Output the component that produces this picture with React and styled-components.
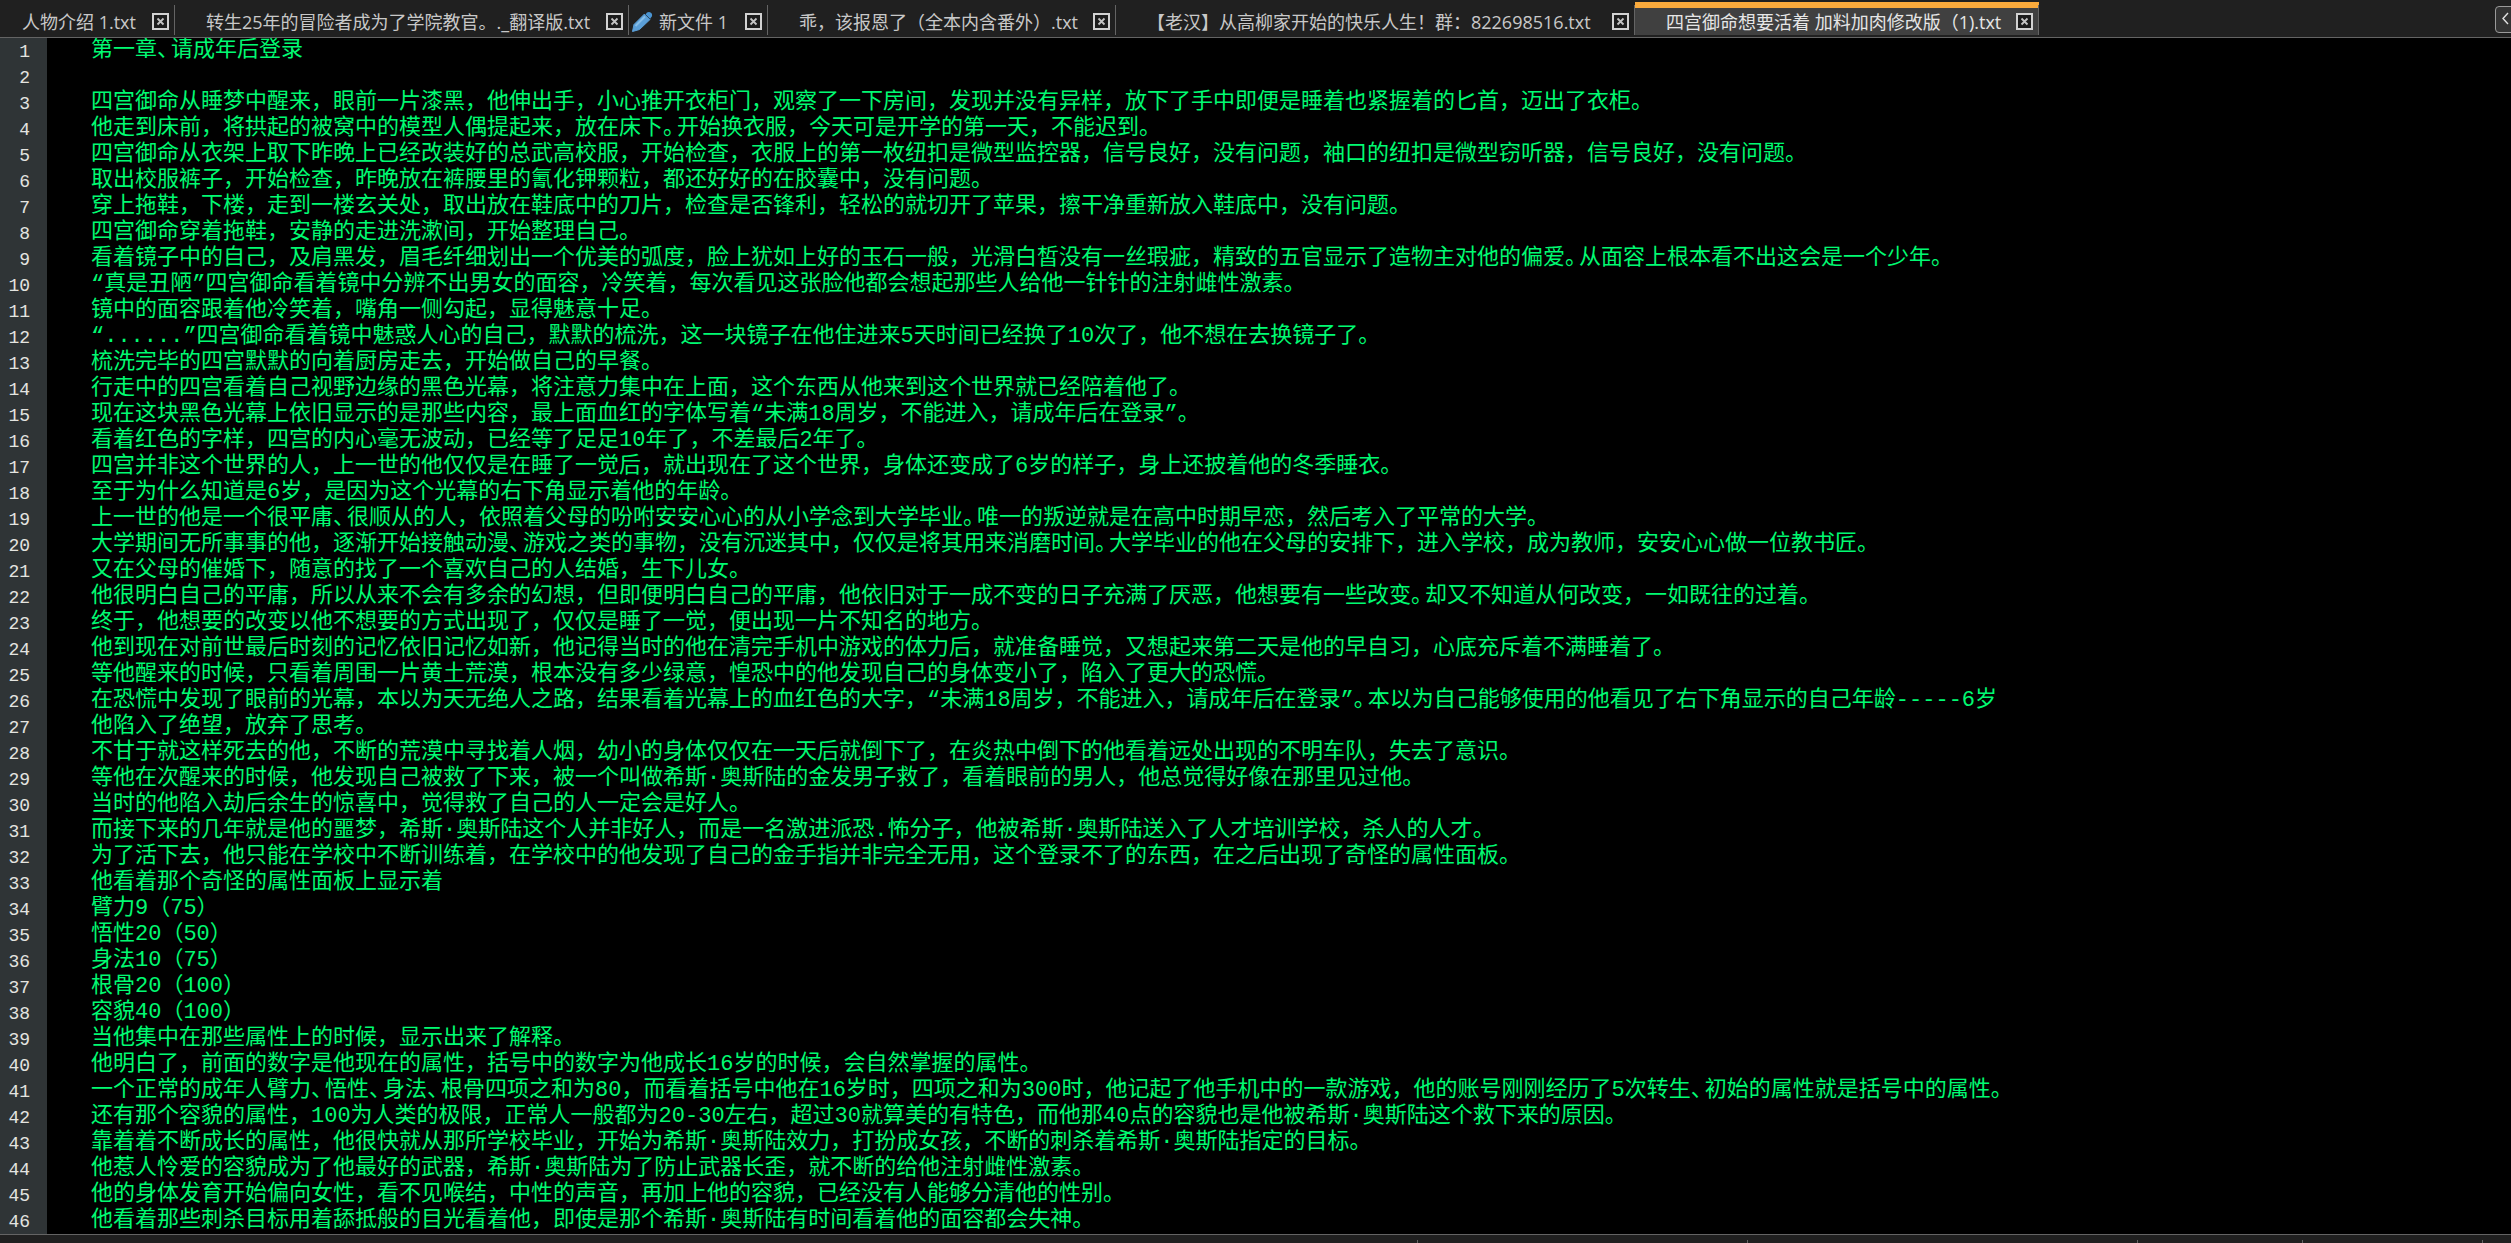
import React from 'react';
import styled, { createGlobalStyle } from 'styled-components';

const GlobalStyle = createGlobalStyle`
    body {
        margin: 0;
        background: #000;
    }

    * {
        box-sizing: border-box;
    }
`

const Page = styled.div`
    display: flex;
    flex-direction: column;
    height: 100vh;
    overflow: hidden;
    background: #000;
`

const TabBar = styled.nav`
    display: flex;
    flex: none;
    height: 38px;
    padding: 2px 0;
    background: #202020;
    border-bottom: 1px solid #646464;
    overflow: hidden;
`

const Tab = styled.div`
    display: flex;
    flex: none;
    align-items: center;
    width: ${props => props.$width}px;
    padding: 0 6px 0 ${props => props.$icon ? 3 : 31}px;
    border-top: 6px solid ${props => props.$active ? '#faaa3c' : 'transparent'};
    background: ${props => props.$active ? '#404040' : 'transparent'};
    position: relative;

    &::after {
        content: '';
        position: absolute;
        right: 0;
        top: -3px;
        bottom: 0;
        width: 1px;
        background: #646464;
    }

    &:first-child {
        padding-left: 22px;
    }
`

const TabTitle = styled.button`
    display: flex;
    flex: 1;
    align-items: center;
    gap: 6px;
    padding: 0;
    border: 0;
    background: none;
    color: ${props => props.$active ? '#e6e6e6' : '#c8c8c8'};
    font-family: 'Open Sans', 'Noto Sans CJK SC', sans-serif;
    font-size: 18px;
    line-height: 26px;
    text-align: left;
    white-space: nowrap;
    text-spacing-trim: space-all;
`

const CloseButton = styled.button`
    display: flex;
    flex: none;
    padding: 0;
    border: 0;
    background: none;
`

const ScrollButton = styled.button`
    flex: none;
    width: 24px;
    height: 27px;
    margin: 4px -8px 0 auto;
    padding: 0 0 0 5px;
    border: 1px solid #9a9a9a;
    border-radius: 4px;
    background: #333;
    text-align: left;
`

const Editor = styled.main`
    flex: 1;
    min-height: 0;
    overflow: hidden;
    background: linear-gradient(to right, #2f3436 47px, #000 47px);
`

const Row = styled.div`
    display: flex;
    height: 26px;
`

const LineNumber = styled.span`
    flex: none;
    width: 47px;
    padding-right: 17px;
    color: #e4e4e0;
    font-family: 'Liberation Mono', monospace;
    font-size: 18px;
    line-height: 28px;
    text-align: right;
`

const LineText = styled.span`
    padding-left: 44px;
    color: #00fa72;
    font-family: 'Liberation Mono', 'Noto Sans CJK SC', monospace;
    font-size: 22px;
    line-height: 26px;
    white-space: pre;
    text-spacing-trim: space-all;
`

const Stop = styled.span`
    display: inline-block;
    width: 14px;
    font-feature-settings: 'halt';
`

const StatusBar = styled.footer`
    display: flex;
    flex: none;
    justify-content: flex-end;
    height: 9px;
    padding-top: 5px;
    background: #202020;
    border-top: 1px solid #646464;
`

const StatusCell = styled.div`
    width: ${props => props.$width}px;
    border-left: 1px solid #646464;
`

const tabs = [
    { name: '人物介绍 1.txt', width: 175 },
    { name: '转生25年的冒险者成为了学院教官。._翻译版.txt', width: 454 },
    { name: '新文件 1', width: 139, icon: true },
    { name: '乖，该报恩了（全本内含番外）.txt', width: 348 },
    { name: '【老汉】从高柳家开始的快乐人生！群：822698516.txt', width: 519 },
    { name: '四宫御命想要活着 加料加肉修改版（1).txt', width: 404, active: true },
]

const statusCells = [330, 390, 165, 180, 29]

const lines = [
    '第一章、请成年后登录',
    '',
    '四宫御命从睡梦中醒来，眼前一片漆黑，他伸出手，小心推开衣柜门，观察了一下房间，发现并没有异样，放下了手中即便是睡着也紧握着的匕首，迈出了衣柜。',
    '他走到床前，将拱起的被窝中的模型人偶提起来，放在床下。开始换衣服，今天可是开学的第一天，不能迟到。',
    '四宫御命从衣架上取下昨晚上已经改装好的总武高校服，开始检查，衣服上的第一枚纽扣是微型监控器，信号良好，没有问题，袖口的纽扣是微型窃听器，信号良好，没有问题。',
    '取出校服裤子，开始检查，昨晚放在裤腰里的氰化钾颗粒，都还好好的在胶囊中，没有问题。',
    '穿上拖鞋，下楼，走到一楼玄关处，取出放在鞋底中的刀片，检查是否锋利，轻松的就切开了苹果，擦干净重新放入鞋底中，没有问题。',
    '四宫御命穿着拖鞋，安静的走进洗漱间，开始整理自己。',
    '看着镜子中的自己，及肩黑发，眉毛纤细划出一个优美的弧度，脸上犹如上好的玉石一般，光滑白皙没有一丝瑕疵，精致的五官显示了造物主对他的偏爱。从面容上根本看不出这会是一个少年。',
    '“真是丑陋”四宫御命看着镜中分辨不出男女的面容，冷笑着，每次看见这张脸他都会想起那些人给他一针针的注射雌性激素。',
    '镜中的面容跟着他冷笑着，嘴角一侧勾起，显得魅意十足。',
    '“......”四宫御命看着镜中魅惑人心的自己，默默的梳洗，这一块镜子在他住进来5天时间已经换了10次了，他不想在去换镜子了。',
    '梳洗完毕的四宫默默的向着厨房走去，开始做自己的早餐。',
    '行走中的四宫看着自己视野边缘的黑色光幕，将注意力集中在上面，这个东西从他来到这个世界就已经陪着他了。',
    '现在这块黑色光幕上依旧显示的是那些内容，最上面血红的字体写着“未满18周岁，不能进入，请成年后在登录”。',
    '看着红色的字样，四宫的内心毫无波动，已经等了足足10年了，不差最后2年了。',
    '四宫并非这个世界的人，上一世的他仅仅是在睡了一觉后，就出现在了这个世界，身体还变成了6岁的样子，身上还披着他的冬季睡衣。',
    '至于为什么知道是6岁，是因为这个光幕的右下角显示着他的年龄。',
    '上一世的他是一个很平庸、很顺从的人，依照着父母的吩咐安安心心的从小学念到大学毕业。唯一的叛逆就是在高中时期早恋，然后考入了平常的大学。',
    '大学期间无所事事的他，逐渐开始接触动漫、游戏之类的事物，没有沉迷其中，仅仅是将其用来消磨时间。大学毕业的他在父母的安排下，进入学校，成为教师，安安心心做一位教书匠。',
    '又在父母的催婚下，随意的找了一个喜欢自己的人结婚，生下儿女。',
    '他很明白自己的平庸，所以从来不会有多余的幻想，但即便明白自己的平庸，他依旧对于一成不变的日子充满了厌恶，他想要有一些改变。却又不知道从何改变，一如既往的过着。',
    '终于，他想要的改变以他不想要的方式出现了，仅仅是睡了一觉，便出现一片不知名的地方。',
    '他到现在对前世最后时刻的记忆依旧记忆如新，他记得当时的他在清完手机中游戏的体力后，就准备睡觉，又想起来第二天是他的早自习，心底充斥着不满睡着了。',
    '等他醒来的时候，只看着周围一片黄土荒漠，根本没有多少绿意，惶恐中的他发现自己的身体变小了，陷入了更大的恐慌。',
    '在恐慌中发现了眼前的光幕，本以为天无绝人之路，结果看着光幕上的血红色的大字，“未满18周岁，不能进入，请成年后在登录”。本以为自己能够使用的他看见了右下角显示的自己年龄-----6岁',
    '他陷入了绝望，放弃了思考。',
    '不甘于就这样死去的他，不断的荒漠中寻找着人烟，幼小的身体仅仅在一天后就倒下了，在炎热中倒下的他看着远处出现的不明车队，失去了意识。',
    '等他在次醒来的时候，他发现自己被救了下来，被一个叫做希斯·奥斯陆的金发男子救了，看着眼前的男人，他总觉得好像在那里见过他。',
    '当时的他陷入劫后余生的惊喜中，觉得救了自己的人一定会是好人。',
    '而接下来的几年就是他的噩梦，希斯·奥斯陆这个人并非好人，而是一名激进派恐.怖分子，他被希斯·奥斯陆送入了人才培训学校，杀人的人才。',
    '为了活下去，他只能在学校中不断训练着，在学校中的他发现了自己的金手指并非完全无用，这个登录不了的东西，在之后出现了奇怪的属性面板。',
    '他看着那个奇怪的属性面板上显示着',
    '臂力9（75）',
    '悟性20（50）',
    '身法10（75）',
    '根骨20（100）',
    '容貌40（100）',
    '当他集中在那些属性上的时候，显示出来了解释。',
    '他明白了，前面的数字是他现在的属性，括号中的数字为他成长16岁的时候，会自然掌握的属性。',
    '一个正常的成年人臂力、悟性、身法、根骨四项之和为80，而看着括号中他在16岁时，四项之和为300时，他记起了他手机中的一款游戏，他的账号刚刚经历了5次转生、初始的属性就是括号中的属性。',
    '还有那个容貌的属性，100为人类的极限，正常人一般都为20-30左右，超过30就算美的有特色，而他那40点的容貌也是他被希斯·奥斯陆这个救下来的原因。',
    '靠着着不断成长的属性，他很快就从那所学校毕业，开始为希斯·奥斯陆效力，打扮成女孩，不断的刺杀着希斯·奥斯陆指定的目标。',
    '他惹人怜爱的容貌成为了他最好的武器，希斯·奥斯陆为了防止武器长歪，就不断的给他注射雌性激素。',
    '他的身体发育开始偏向女性，看不见喉结，中性的声音，再加上他的容貌，已经没有人能够分清他的性别。',
    '他看着那些刺杀目标用着舔抵般的目光看着他，即使是那个希斯·奥斯陆有时间看着他的面容都会失神。',
]

function CloseIcon() {
    return (
        <svg width="17" height="17" viewBox="0 0 17 17">
            <rect x="1" y="1" width="15" height="15" fill="#1c1c1c" stroke="#d2d2d2" strokeWidth="2" />
            <path d="M5.5 5.5L11.5 11.5M11.5 5.5L5.5 11.5" stroke="#c4c4c4" strokeWidth="1.8" />
        </svg>
    );
}

function PencilIcon() {
    return (
        <svg width="21" height="21" viewBox="0 0 21 21">
            <path d="M0.5 20.5L2 13.5L12.5 3L18 8.5L7.5 18.5Z" fill="#5b9fd8" stroke="#5b9fd8" strokeLinejoin="round" />
            <path d="M13.5 3.5Q15 0.5 18 1.2Q21 2.5 19.8 5.5L18 8Z" fill="#4a94d2" />
            <path d="M13 3L18 8" stroke="#2c4a66" strokeWidth="1" />
            <path d="M3.5 15L13 5.5" stroke="#86bde8" strokeWidth="2" />
        </svg>
    );
}

// 句号和顿号只占一个窄格
function renderLine(text) {
    return text.split(/([。、])/).map((part, i) => (
        i % 2 ? <Stop key={i}>{part}</Stop> : part
    ));
}

export default function App() {
    return (
        <Page>
            <GlobalStyle />
            <TabBar>
                {tabs.map(tab => (
                    <Tab key={tab.name} $width={tab.width} $icon={tab.icon} $active={tab.active}>
                        <TabTitle $active={tab.active}>
                            {tab.icon && <PencilIcon />}
                            {tab.name}
                        </TabTitle>
                        <CloseButton aria-label="关闭">
                            <CloseIcon />
                        </CloseButton>
                    </Tab>
                ))}
                <ScrollButton aria-label="向左滚动">
                    <svg width="8" height="13" viewBox="0 0 8 13">
                        <path d="M7 1L2 6.5L7 12" fill="none" stroke="#e0e0e0" strokeWidth="1.4" />
                    </svg>
                </ScrollButton>
            </TabBar>
            <Editor>
                {lines.map((line, i) => (
                    <Row key={i}>
                        <LineNumber>{i + 1}</LineNumber>
                        <LineText>{renderLine(line)}</LineText>
                    </Row>
                ))}
            </Editor>
            <StatusBar>
                {statusCells.map((width, i) => (
                    <StatusCell key={i} $width={width} />
                ))}
            </StatusBar>
        </Page>
    );
}
